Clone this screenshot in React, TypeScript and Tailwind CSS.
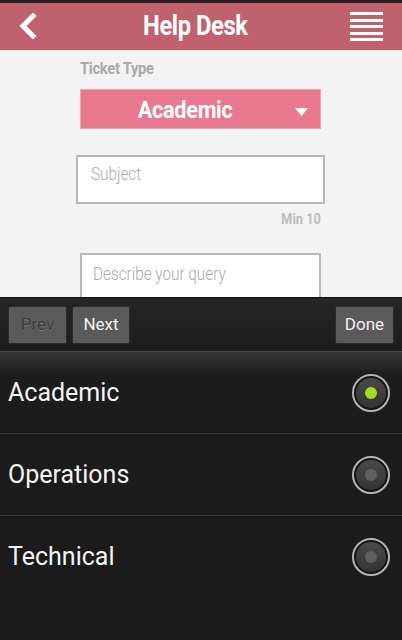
const options = [
  { label: "Academic", checked: true },
  { label: "Operations", checked: false },
  { label: "Technical", checked: false },
];

function Radio({ checked }: { checked: boolean }) {
  return (
    <div className="w-[38px] h-[38px] rounded-full border-2 border-[#b4b4b4] bg-[#151515] p-[2px]">
      <div className="w-full h-full rounded-full bg-gradient-to-b from-[#4a4a4a] to-[#343434] flex items-center justify-center">
        <div
          className={
            checked
              ? "w-[12px] h-[12px] rounded-full bg-[#a6dc1e]"
              : "w-[12px] h-[12px] rounded-full bg-[#5f5f5f]"
          }
        />
      </div>
    </div>
  );
}

export default function App() {
  return (
    <div className="w-full h-[640px] flex flex-col overflow-hidden bg-[#1b1b1b] font-['Roboto',sans-serif]">
      <div className="h-[3px] shrink-0 bg-[#242424]" />
      <header className="h-[47px] shrink-0 bg-[#c0626e] border-b border-[#d04a60] flex items-center justify-between px-[18px]">
        <svg width="19" height="26" viewBox="0 0 19 26">
          <path d="M15 3 L5 13 L15 23" fill="none" stroke="#fff" strokeWidth="5" strokeLinecap="square" />
        </svg>
        <h1 className="text-white font-bold text-[27px] tracking-[-0.5px] scale-x-[0.88] ml-[4px]">Help Desk</h1>
        <div className="w-[33px] flex flex-col gap-[3.5px] mr-[1px] mt-[1px]">
          <div className="h-[3px] bg-white" />
          <div className="h-[3px] bg-white" />
          <div className="h-[3px] bg-white" />
          <div className="h-[3px] bg-white" />
          <div className="h-[3px] bg-white" />
        </div>
      </header>

      <main className="h-[247px] shrink-0 bg-[#f3f3f3] overflow-hidden flex flex-col">
        <p className="shrink-0 ml-[80px] mt-[7px] text-[16px] font-bold text-[#aaaaaa] tracking-[-0.3px] scale-x-[0.92] origin-left">
          Ticket Type
        </p>
        <div className="shrink-0 ml-[80px] mt-[8px] w-[241px] h-[40px] bg-[#e8798e] border border-[#f0a5b3] flex items-center relative">
          <span className="flex-1 text-center text-white font-bold text-[24px] tracking-[-0.3px] scale-x-[0.9] pr-[34px] pt-[1px]">
            Academic
          </span>
          <svg className="absolute right-[12px] top-[18px]" width="13" height="8" viewBox="0 0 13 8">
            <path d="M0 0 H13 L6.5 8 Z" fill="#fff" />
          </svg>
        </div>
        <div className="shrink-0 ml-[76px] mt-[26px] w-[249px] h-[49px] bg-white border-2 border-[#b8b8b8] pl-[13px] pt-[3px]">
          <span className="inline-block text-[18px] font-light text-[#a9a9a9] scale-x-[0.85] origin-left">Subject</span>
        </div>
        <p className="shrink-0 w-[321px] text-right mt-[5px] text-[14px] font-bold text-[#bdbdbd] scale-x-[0.92] origin-right">
          Min 10
        </p>
        <div className="shrink-0 ml-[80px] mt-[23px] w-[241px] h-[60px] bg-white border-2 border-[#b8b8b8] pl-[11px] pt-[5px]">
          <span className="inline-block text-[18px] font-light text-[#a9a9a9] scale-x-[0.85] origin-left whitespace-nowrap">
            Describe your query
          </span>
        </div>
      </main>

      <div className="h-[54px] shrink-0 border-t border-[#0e0e0e] bg-gradient-to-b from-[#262626] to-[#1c1c1c] flex items-center px-[8px] gap-[5px]">
        <button className="w-[59px] h-[38px] rounded-[2px] bg-[#5a5a5a] border border-[#2c2c2c] text-[17px] text-[#3c3c3c] [text-shadow:0_1px_0_#777]">
          Prev
        </button>
        <button className="w-[58px] h-[38px] rounded-[2px] bg-[#5a5a5a] border border-[#2c2c2c] text-[17px] text-[#f2f2f2]">
          Next
        </button>
        <div className="flex-1" />
        <button className="w-[59px] h-[38px] rounded-[2px] bg-[#5a5a5a] border border-[#2c2c2c] text-[17px] text-[#f2f2f2]">
          Done
        </button>
      </div>

      <div className="flex-1 border-t border-[#4a4a4a] bg-gradient-to-b from-[#353535] via-[#1c1c1c] via-[8%] to-[#1b1b1b]">
        {options.map((o, i) => (
          <div
            key={o.label}
            className={
              i < options.length - 1
                ? "h-[82px] flex items-center justify-between pl-[8px] pr-[12px] border-b border-[#353535]"
                : "h-[82px] flex items-center justify-between pl-[8px] pr-[12px]"
            }
          >
            <span className="text-[25px] text-[#f4f4f4]">{o.label}</span>
            <Radio checked={o.checked} />
          </div>
        ))}
      </div>
    </div>
  );
}
